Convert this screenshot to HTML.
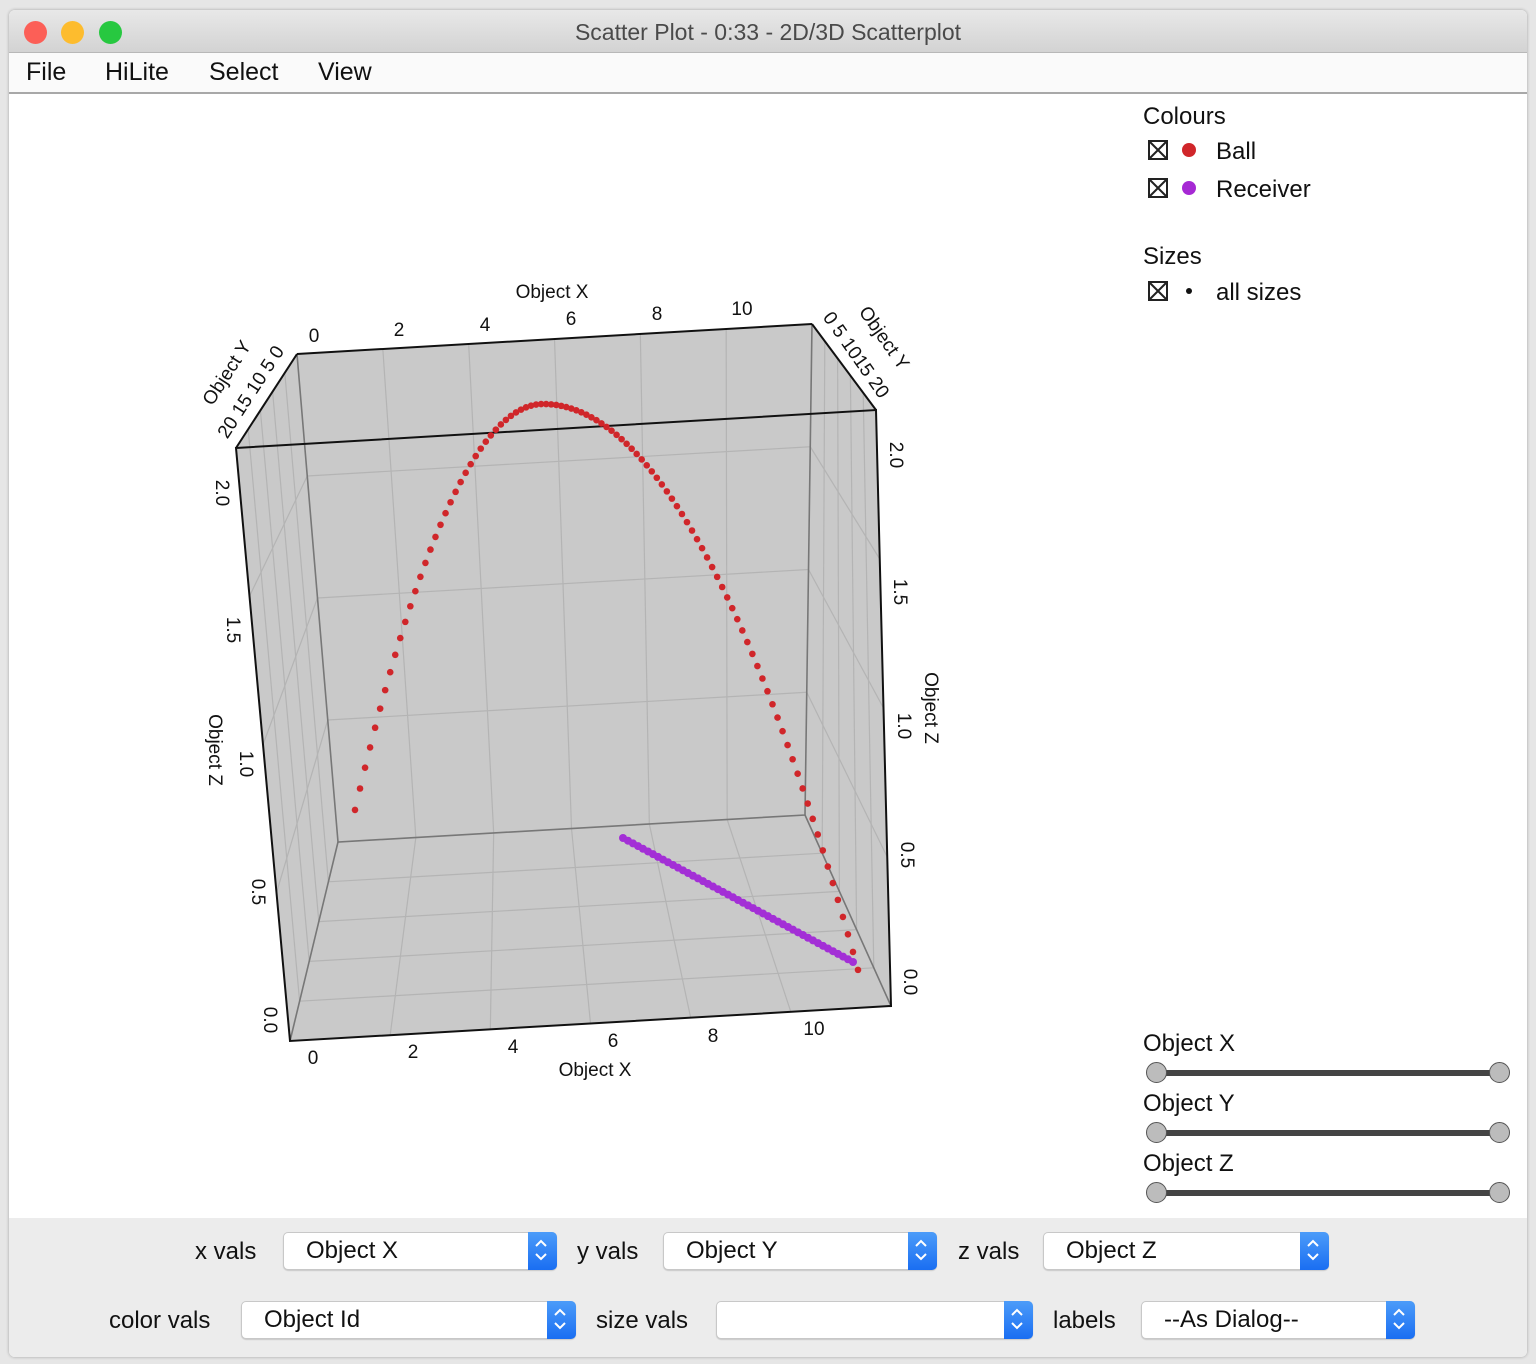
<!DOCTYPE html>
<html><head><meta charset="utf-8"><style>
body{margin:0;width:1536px;height:1364px;background:#e6e6e6;position:relative;overflow:hidden;font-family:"Liberation Sans","DejaVu Sans",sans-serif;}
.win{position:absolute;left:9px;top:10px;width:1518px;height:1347px;background:#fff;border-radius:6px;overflow:hidden;box-shadow:0 0 3px rgba(0,0,0,.3);}
.title{position:absolute;left:0;top:0;right:0;height:42px;background:linear-gradient(#e8e8e8,#d3d3d3);border-bottom:1px solid #b8b8b8;text-align:center;line-height:44px;font-size:23px;color:#4a4a4a;}
.dot{position:absolute;top:11px;width:23px;height:23px;border-radius:50%;}
.menu{position:absolute;left:0;top:43px;right:0;height:39px;background:#fafafa;border-bottom:2px solid #a8a8a8;}
.menu span{position:absolute;top:5px;font-size:25px;color:#111;}
.t{position:absolute;font-size:24px;color:#111;white-space:nowrap;}
.bottom{position:absolute;left:0;top:1208px;right:0;bottom:0;background:#ececec;}
.lbl{position:absolute;font-size:24px;color:#111;white-space:nowrap;}
.combo{position:absolute;height:36px;background:#fff;border:1px solid #c8c8c8;border-radius:5px;box-shadow:0 1px 1px rgba(0,0,0,.15);font-size:24px;line-height:36px;color:#111;}
.combo span{position:absolute;left:22px;}
.arr{position:absolute;right:-1px;top:-1px;width:29px;height:38px;background:linear-gradient(#4c9cf9,#1a6ef2);border-radius:0 5px 5px 0;}
.sl{position:absolute;left:1148px;width:342px;height:6px;background:#444;border-radius:3px;}
.kn{position:absolute;width:19px;height:19px;border-radius:50%;background:#bcbcbc;border:1.5px solid #555;}
</style></head><body>
<div class="win">
 <div class="title">Scatter Plot - 0:33 - 2D/3D Scatterplot
  <div class="dot" style="left:15px;background:#fc5f57"></div>
  <div class="dot" style="left:52px;background:#fdbc2e"></div>
  <div class="dot" style="left:90px;background:#27c840"></div>
 </div>
 <div class="menu"><span style="left:17px">File</span><span style="left:96px">HiLite</span><span style="left:200px">Select</span><span style="left:309px">View</span></div>
</div>
<svg width="1536" height="1364" style="position:absolute;left:0;top:0" id="plot" font-family="Liberation Sans, DejaVu Sans, sans-serif" font-size="19" fill="#111">
 <polygon points="236,448 297,354 812,324 876,410 891,1006 290,1041" fill="#c9c9c9"/>
 <g id="grid" stroke="#b4b4b4" stroke-width="1.2" fill="none"></g>
 <g stroke="#777" stroke-width="1.6" fill="none">
  <polyline points="297,354 338,842 805,815 812,324"/>
  <line x1="338" y1="842" x2="290" y2="1041"/><line x1="805" y1="815" x2="891" y2="1006"/>
 </g>
 <g stroke="#111" stroke-width="2" fill="none">
  <polygon points="236,448 876,410 891,1006 290,1041"/>
  <line x1="236" y1="448" x2="297" y2="354"/><line x1="297" y1="354" x2="812" y2="324"/><line x1="812" y1="324" x2="876" y2="410"/>
 </g>
 <g id="pts"></g>
 <g text-anchor="middle">
  <text x="314" y="342">0</text><text x="399" y="336">2</text><text x="485" y="331">4</text><text x="571" y="325">6</text><text x="657" y="320">8</text><text x="742" y="315">10</text>
  <text x="552" y="298">Object X</text>
  <text x="313" y="1064">0</text><text x="413" y="1058">2</text><text x="513" y="1053">4</text><text x="613" y="1047">6</text><text x="713" y="1042">8</text><text x="814" y="1035">10</text>
  <text x="595" y="1076">Object X</text>
  <g transform="translate(222,493) rotate(90)"><text y="6">2.0</text></g>
  <g transform="translate(233,630) rotate(90)"><text y="6">1.5</text></g>
  <g transform="translate(246,764) rotate(90)"><text y="6">1.0</text></g>
  <g transform="translate(258,892) rotate(90)"><text y="6">0.5</text></g>
  <g transform="translate(270,1020) rotate(90)"><text y="6">0.0</text></g>
  <g transform="translate(215,750) rotate(90)"><text y="6">Object Z</text></g>
  <g transform="translate(896,455) rotate(90)"><text y="6">2.0</text></g>
  <g transform="translate(900,592) rotate(90)"><text y="6">1.5</text></g>
  <g transform="translate(904,726) rotate(90)"><text y="6">1.0</text></g>
  <g transform="translate(907,855) rotate(90)"><text y="6">0.5</text></g>
  <g transform="translate(910,982) rotate(90)"><text y="6">0.0</text></g>
  <g transform="translate(931,708) rotate(90)"><text y="6">Object Z</text></g>
  <g transform="translate(227,373) rotate(-57)"><text y="6">Object Y</text></g>
  <g transform="translate(251,392) rotate(-57)"><text y="6">20 15 10 5 0</text></g>
  <g transform="translate(856,355) rotate(55)"><text y="6">0 5 1015 20</text></g>
  <g transform="translate(884,338) rotate(55)"><text y="6">Object Y</text></g>
 </g>
 <g font-size="24" fill="#111">
  <text x="1143" y="124">Colours</text>
  <text x="1216" y="159">Ball</text><text x="1216" y="197">Receiver</text>
  <text x="1143" y="264">Sizes</text><text x="1216" y="300">all sizes</text>
 </g>
 <g stroke="#222" stroke-width="2" fill="none">
  <rect x="1149" y="141" width="18" height="18"/><path d="M1149 141L1167 159M1167 141L1149 159"/>
  <rect x="1149" y="179" width="18" height="18"/><path d="M1149 179L1167 197M1167 179L1149 197"/>
  <rect x="1149" y="282" width="18" height="18"/><path d="M1149 282L1167 300M1167 282L1149 300"/>
 </g>
 <circle cx="1189" cy="150" r="7" fill="#d0262a"/><circle cx="1189" cy="188" r="7" fill="#a629d4"/><circle cx="1189" cy="291" r="3" fill="#111"/>
</svg>
<div class="t" style="left:1143px;top:1030px">Object X</div>
<div class="t" style="left:1143px;top:1090px">Object Y</div>
<div class="t" style="left:1143px;top:1150px">Object Z</div>
<div class="sl" style="left:1157px;top:1070px"></div><div class="kn" style="left:1146px;top:1062px"></div><div class="kn" style="left:1489px;top:1062px"></div>
<div class="sl" style="left:1157px;top:1130px"></div><div class="kn" style="left:1146px;top:1122px"></div><div class="kn" style="left:1489px;top:1122px"></div>
<div class="sl" style="left:1157px;top:1190px"></div><div class="kn" style="left:1146px;top:1182px"></div><div class="kn" style="left:1489px;top:1182px"></div>
<div class="bottom" style="left:9px;top:1218px;right:9px;bottom:7px;position:absolute;border-radius:0 0 6px 6px"></div>
<div class="lbl" style="left:195px;top:1238px">x vals</div>
<div class="combo" style="left:283px;top:1232px;width:272px"><span>Object X</span><div class="arr"></div></div>
<div class="lbl" style="left:577px;top:1238px">y vals</div>
<div class="combo" style="left:663px;top:1232px;width:272px"><span>Object Y</span><div class="arr"></div></div>
<div class="lbl" style="left:958px;top:1238px">z vals</div>
<div class="combo" style="left:1043px;top:1232px;width:284px"><span>Object Z</span><div class="arr"></div></div>
<div class="lbl" style="left:109px;top:1307px">color vals</div>
<div class="combo" style="left:241px;top:1301px;width:333px"><span>Object Id</span><div class="arr"></div></div>
<div class="lbl" style="left:596px;top:1307px">size vals</div>
<div class="combo" style="left:716px;top:1301px;width:315px"><span></span><div class="arr"></div></div>
<div class="lbl" style="left:1053px;top:1307px">labels</div>
<div class="combo" style="left:1141px;top:1301px;width:272px"><span>--As Dialog--</span><div class="arr"></div></div>
<svg width="1536" height="1364" style="position:absolute;left:0;top:0;pointer-events:none" id="arrs"></svg>
<script>
var NS="http://www.w3.org/2000/svg";
function el(p,n,a){var e=document.createElementNS(NS,n);for(var k in a)e.setAttribute(k,a[k]);p.appendChild(e);return e;}
function L(a,b,t){return [a[0]+(b[0]-a[0])*t,a[1]+(b[1]-a[1])*t];}
function Q(p00,p10,p11,p01,u,v){return L(L(p00,p10,u),L(p01,p11,u),v);}
var g=document.getElementById('grid');
function face(p00,p10,p11,p01,nu,nv){
 for(var i=1;i<nu;i++){var a=Q(p00,p10,p11,p01,i/nu,0),b=Q(p00,p10,p11,p01,i/nu,1);el(g,'line',{x1:a[0],y1:a[1],x2:b[0],y2:b[1]});}
 for(var j=1;j<nv;j++){var a=Q(p00,p10,p11,p01,0,j/nv),b=Q(p00,p10,p11,p01,1,j/nv);el(g,'line',{x1:a[0],y1:a[1],x2:b[0],y2:b[1]});}
}
var BTL=[297,354],BTR=[812,324],BBR=[805,815],BBL=[338,842],FTL=[236,448],FTR=[876,410],FBR=[891,1006],FBL=[290,1041];
face(BTL,BTR,BBR,BBL,6,4);
face(BBL,BBR,FBR,FBL,6,5);
face(BTL,FTL,FBL,BBL,5,4);
face(BTR,FTR,FBR,BBR,5,4);
var p=document.getElementById('pts');
for(var i=0;i<=46;i++){var t=i/46;var x=623+(853-623)*t,y=838+(962-838)*t;el(p,'circle',{cx:x,cy:y,r:4,fill:'#a32fd6'});}
for(var i=0;i<=100;i++){var t=i/100;var x=355+503*t;var tp=0.374,d=t-tp;var y=d<0?404+2902*d*d:404+1444*d*d;
 el(p,'circle',{cx:x,cy:y,r:3.3,fill:'#d0262a'});}
var s=document.getElementById('arrs');
[[541,1250],[921,1250],[1313,1250],[560,1319],[1017,1319],[1399,1319]].forEach(function(c){
 el(s,'path',{d:'M'+(c[0]-5)+' '+(c[1]-4)+'l5 -5l5 5M'+(c[0]-5)+' '+(c[1]+4)+'l5 5l5 -5',stroke:'#fff','stroke-width':2,fill:'none'});
});
</script>
</body></html>
